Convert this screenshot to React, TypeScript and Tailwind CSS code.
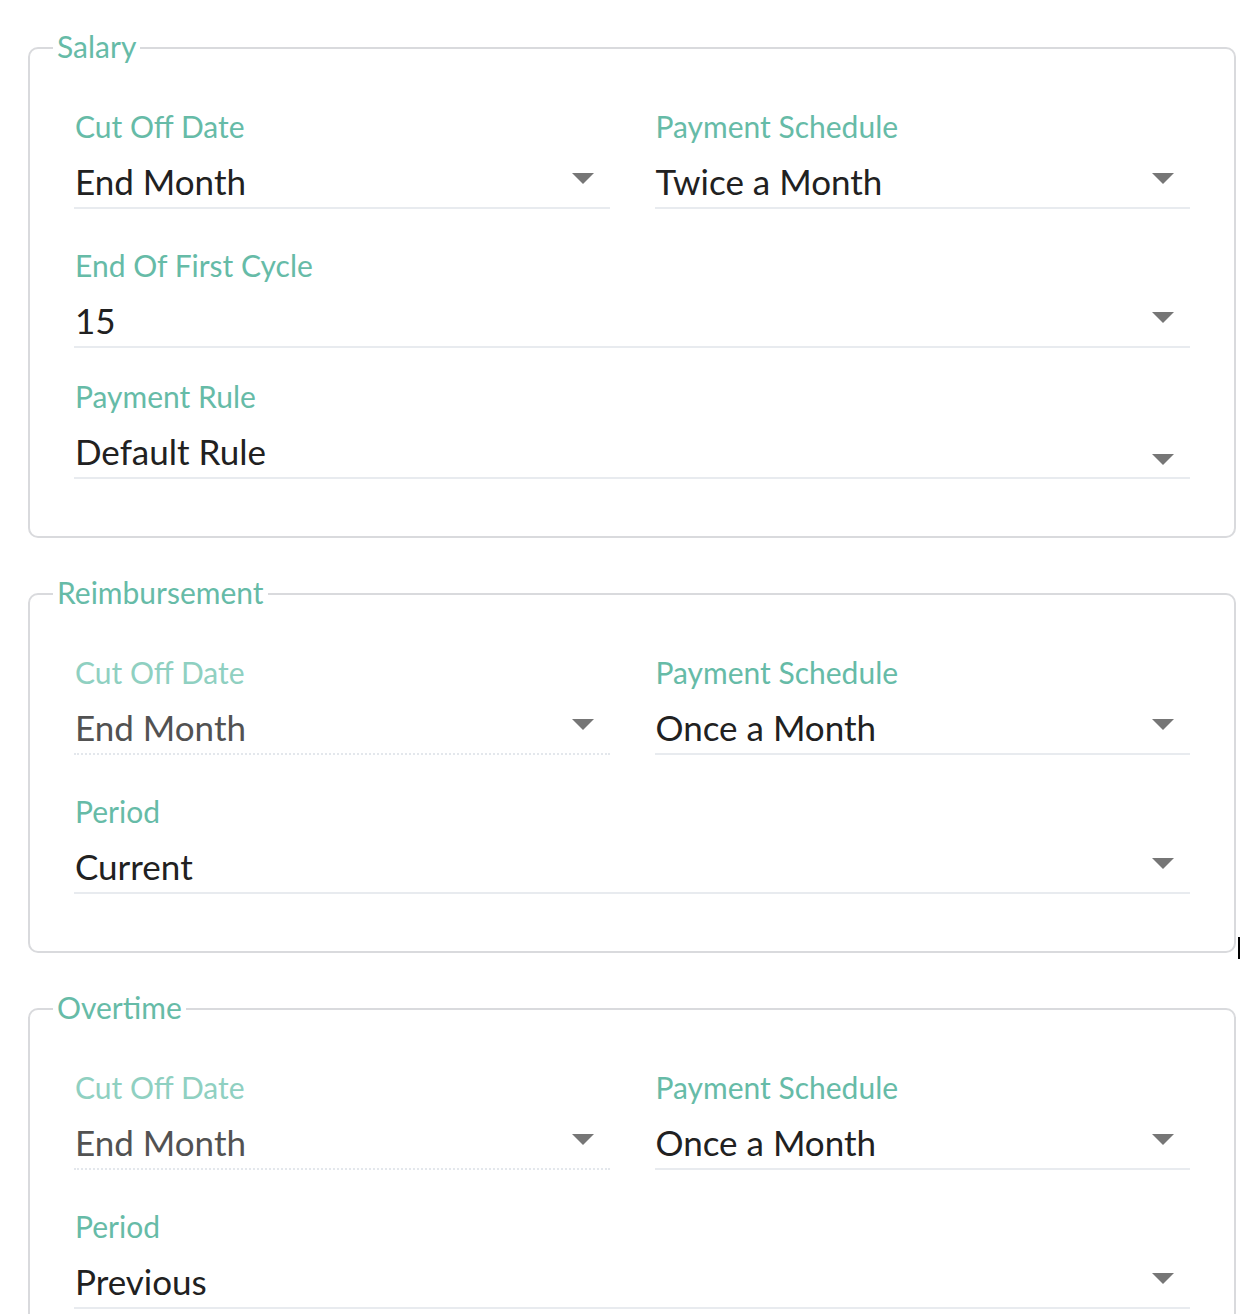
import React from "react";

type Field = {
  label: string;
  value: string;
  disabled?: boolean;
  full?: boolean;
  arrowLow?: boolean;
  tight?: boolean;
};

function Arrow({ low }: { low?: boolean }) {
  return (
    <svg
      width="22"
      height="11"
      viewBox="0 0 22 11"
      className={low ? "mt-[17px] mr-[16px] shrink-0" : "mb-[5px] mr-[16px] shrink-0"}
    >
      <path d="M0 0 H22 L11 11 Z" fill="#767676" />
    </svg>
  );
}

function SelectField({ f }: { f: Field }) {
  return (
    <div>
      <div
        className={
          "text-[30px] leading-[36px] pl-[1px] " +
          (f.disabled ? "text-[#8fd0c1]" : "text-[#66bba7]")
        }
      >
        {f.label}
      </div>
      <div
        className={
          "mt-[15px] pb-[4px] flex items-center justify-between border-b-2 " +
          (f.disabled ? "border-dotted border-[#e3e7ec]" : "border-solid border-[#e8ebef]")
        }
      >
        <span
          className={
            "text-[35px] leading-[44px] pl-[1px] " +
            (f.disabled ? "text-[#525252]" : "text-[#212121]")
          }
        >
          {f.value}
        </span>
        <Arrow low={f.arrowLow} />
      </div>
    </div>
  );
}

function Group({
  title,
  fields,
  cursor,
}: {
  title: string;
  fields: Field[];
  cursor?: boolean;
}) {
  return (
    <div className="relative">
      <fieldset className="ml-[28px] w-[1208px] rounded-[10px] border-2 border-[#d9dadd] px-[44px] pb-[57px] pt-[42px]">
        <legend className="ml-[-21px] px-[4px] text-[30px] leading-[36px] text-[#66bba7]">
          <span className="relative top-[-2px]">{title}</span>
        </legend>
        <div className="grid grid-cols-2 gap-x-[45px]">
          {fields.map((f, i) => (
            <div
              key={i}
              className={
                (f.full ? "col-span-2 " : "") +
                (i >= 2 ? (f.tight ? "mt-[30px]" : "mt-[38px]") : "")
              }
            >
              <SelectField f={f} />
            </div>
          ))}
        </div>
      </fieldset>
      {cursor && (
        <div className="absolute right-[1px] bottom-[-6px] h-[22px] w-[2px] bg-black" />
      )}
    </div>
  );
}

export default function App() {
  return (
    <div
      className="min-h-[1314px] w-[1241px] overflow-hidden bg-white pt-[30px]"
      style={{ fontFamily: "Lato, 'Open Sans', sans-serif" }}
    >
      <div className="flex flex-col gap-[38px]">
        <Group
          title="Salary"
          fields={[
            { label: "Cut Off Date", value: "End Month" },
            { label: "Payment Schedule", value: "Twice a Month" },
            { label: "End Of First Cycle", value: "15", full: true },
            { label: "Payment Rule", value: "Default Rule", full: true, arrowLow: true, tight: true },
          ]}
        />
        <Group
          title="Reimbursement"
          cursor
          fields={[
            { label: "Cut Off Date", value: "End Month", disabled: true },
            { label: "Payment Schedule", value: "Once a Month" },
            { label: "Period", value: "Current", full: true },
          ]}
        />
        <Group
          title="Overtime"
          fields={[
            { label: "Cut Off Date", value: "End Month", disabled: true },
            { label: "Payment Schedule", value: "Once a Month" },
            { label: "Period", value: "Previous", full: true },
          ]}
        />
      </div>
    </div>
  );
}
